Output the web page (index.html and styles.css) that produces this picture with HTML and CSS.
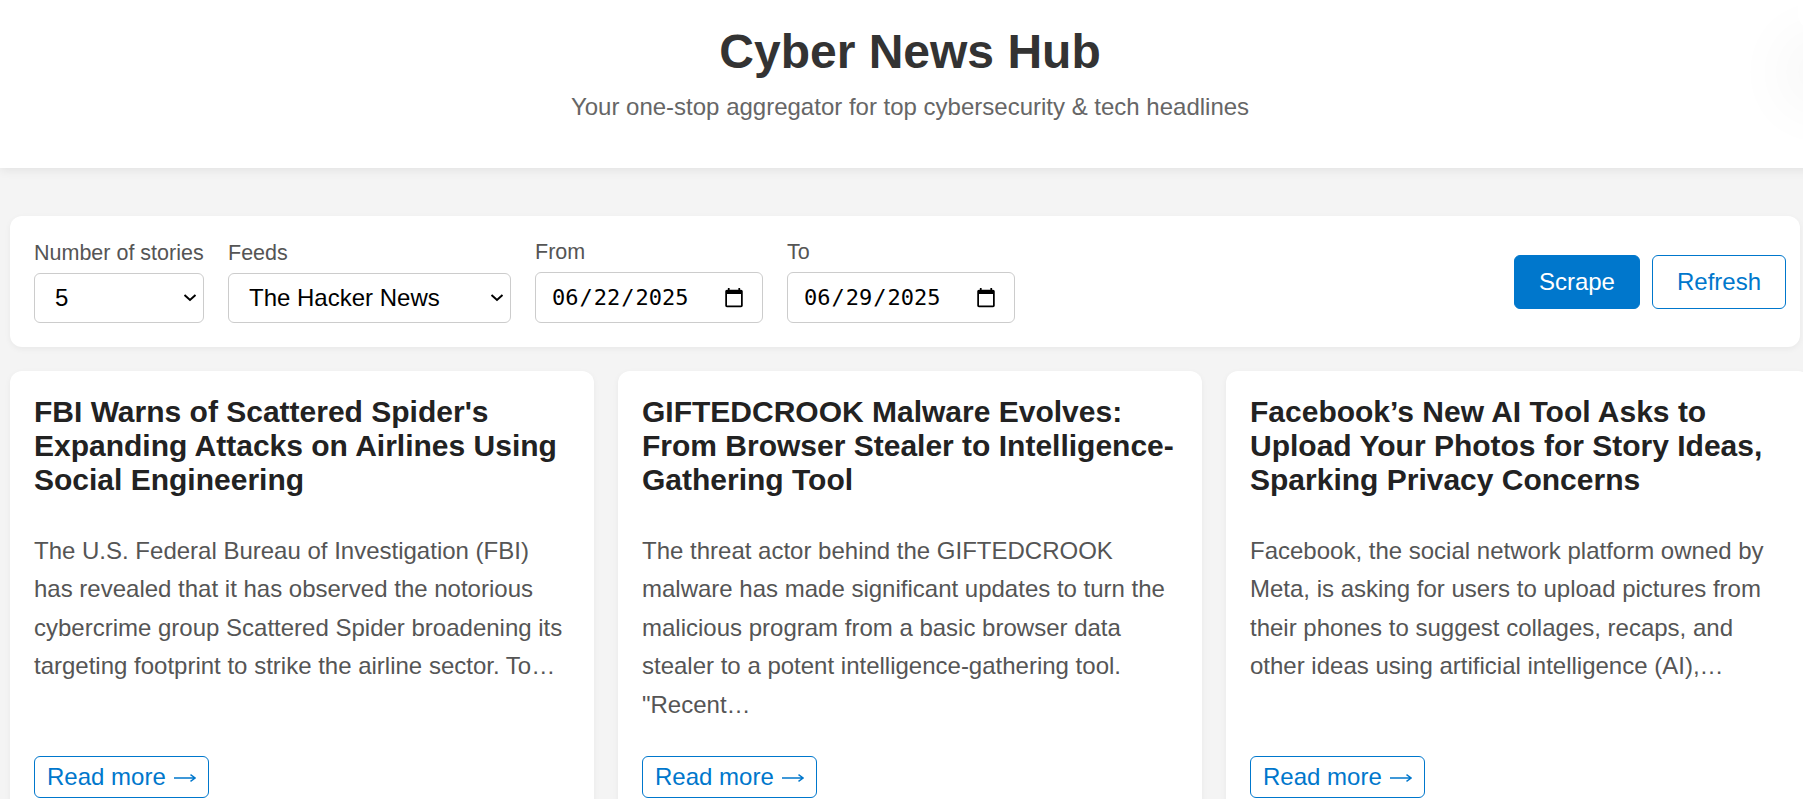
FILE: index.html
```html
<!DOCTYPE html>
<html lang="en">
<head>
<meta charset="utf-8">
<title>Cyber News Hub</title>
<link rel="stylesheet" href="styles.css">
</head>
<body>
<header class="site-header">
  <h1 class="site-title">Cyber News Hub</h1>
  <p class="site-tagline">Your one-stop aggregator for top cybersecurity &amp; tech headlines</p>
</header>

<main class="container">
  <section class="controls">
    <div class="field">
      <label class="field-label" for="count">Number of stories</label>
      <select id="count" class="input select sel-count">
        <option>5</option>
        <option>10</option>
        <option>15</option>
        <option>20</option>
      </select>
    </div>
    <div class="field">
      <label class="field-label" for="feed">Feeds</label>
      <select id="feed" class="input select sel-feed">
        <option>The Hacker News</option>
        <option>Krebs on Security</option>
        <option>BleepingComputer</option>
      </select>
    </div>
    <div class="field">
      <label class="field-label" for="from">From</label>
      <input id="from" class="input date" type="date" value="2025-06-22">
    </div>
    <div class="field">
      <label class="field-label" for="to">To</label>
      <input id="to" class="input date" type="date" value="2025-06-29">
    </div>
    <div class="actions">
      <button class="btn btn-primary" type="button">Scrape</button>
      <button class="btn btn-outline" type="button">Refresh</button>
    </div>
  </section>

  <section class="grid">
    <article class="card">
      <h2 class="card-title">FBI Warns of Scattered Spider's Expanding Attacks on Airlines Using Social Engineering</h2>
      <p class="card-text">The U.S. Federal Bureau of Investigation (FBI) has revealed that it has observed the notorious cybercrime group Scattered Spider broadening its targeting footprint to strike the airline sector. To…</p>
      <a class="read-more" href="#">Read more <svg class="arrow" width="22" height="10" viewBox="0 0 22 10" aria-hidden="true"><path d="M0 5H21M16.5 1.6L21.2 5L16.5 8.4" fill="none" stroke="currentColor" stroke-width="1.4"/></svg></a>
    </article>
    <article class="card">
      <h2 class="card-title">GIFTEDCROOK Malware Evolves: From Browser Stealer to Intelligence-Gathering Tool</h2>
      <p class="card-text">The threat actor behind the GIFTEDCROOK malware has made significant updates to turn the malicious program from a basic browser data stealer to a potent intelligence-gathering tool. "Recent…</p>
      <a class="read-more" href="#">Read more <svg class="arrow" width="22" height="10" viewBox="0 0 22 10" aria-hidden="true"><path d="M0 5H21M16.5 1.6L21.2 5L16.5 8.4" fill="none" stroke="currentColor" stroke-width="1.4"/></svg></a>
    </article>
    <article class="card">
      <h2 class="card-title">Facebook’s New AI Tool Asks to Upload Your Photos for Story Ideas, Sparking Privacy Concerns</h2>
      <p class="card-text">Facebook, the social network platform owned by Meta, is asking for users to upload pictures from their phones to suggest collages, recaps, and other ideas using artificial intelligence (AI),…</p>
      <a class="read-more" href="#">Read more <svg class="arrow" width="22" height="10" viewBox="0 0 22 10" aria-hidden="true"><path d="M0 5H21M16.5 1.6L21.2 5L16.5 8.4" fill="none" stroke="currentColor" stroke-width="1.4"/></svg></a>
    </article>
  </section>
</main>

<button class="theme-toggle" type="button" aria-label="Toggle theme"></button>
</body>
</html>
```

FILE: styles.css
```css
html {
  scrollbar-width: none;
}
html::-webkit-scrollbar {
  display: none;
}

body {
  margin: 0;
  min-width: 1820px;
  background: #f4f4f4;
  font-family: "Liberation Sans", Arial, sans-serif;
  color: #333;
  overflow-x: hidden;
}

.site-header {
  position: relative;
  background: #fff;
  text-align: center;
  padding: 24px 0 24px;
  box-shadow: 0 2px 10px rgba(0, 0, 0, 0.08);
}

.site-title {
  margin: 0;
  font-size: 48px;
  font-weight: bold;
  color: #333;
}

.site-tagline {
  margin: 14px 0 23px;
  font-size: 24px;
  color: #666;
}

.container {
  padding: 48px 10px 0;
}

.controls {
  display: flex;
  align-items: center;
  gap: 24px;
  margin-right: 10px;
  padding: 24px 14px 24px 24px;
  background: #fff;
  border-radius: 12px;
  box-shadow: 0 2px 6px rgba(0, 0, 0, 0.05);
}

.field {
  display: flex;
  flex-direction: column;
  gap: 7px;
}

.field-label {
  font-size: 21.5px;
  color: #555;
}

.input {
  box-sizing: border-box;
  height: 50px;
  padding: 0 16px;
  border: 1px solid #ccc;
  border-radius: 6px;
  background-color: #fff;
  color: #000;
  font-family: "Liberation Sans", Arial, sans-serif;
  font-size: 24px;
}

.select {
  appearance: none;
  -webkit-appearance: none;
  padding: 0 30px 0 20px;
  background-image: url("data:image/svg+xml,%3Csvg xmlns='http://www.w3.org/2000/svg' width='14' height='9' viewBox='0 0 14 9'%3E%3Cpath d='M1.5 2L7 7L12.5 2' fill='none' stroke='%23000' stroke-width='2'/%3E%3C/svg%3E");
  background-repeat: no-repeat;
  background-position: right 6px center;
  background-size: 14px 9px;
}

.sel-count {
  width: 170px;
}

.sel-feed {
  width: 283px;
}

.date {
  width: 228px;
  height: 51px;
  padding: 0 15px;
  font-family: "DejaVu Sans Mono", "Liberation Mono", monospace;
  font-size: 22px;
}

.actions {
  display: flex;
  gap: 12px;
  margin-left: auto;
}

.btn {
  padding: 12px 24px;
  border: 1px solid #0077cc;
  border-radius: 6px;
  font-family: "Liberation Sans", Arial, sans-serif;
  font-size: 24px;
  line-height: normal;
  cursor: pointer;
}

.btn-primary {
  background: #0077cc;
  color: #fff;
}

.btn-outline {
  background: #fff;
  color: #0077cc;
}

.grid {
  display: grid;
  grid-template-columns: repeat(3, 1fr);
  gap: 24px;
  margin-top: 24px;
}

.card {
  display: flex;
  flex-direction: column;
  align-items: flex-start;
  padding: 24px;
  background: #fff;
  border-radius: 12px;
  box-shadow: 0 2px 6px rgba(0, 0, 0, 0.05);
}

.card-title {
  margin: 0 0 35px;
  font-size: 30px;
  font-weight: bold;
  color: #222;
}

.card-text {
  margin: 0 0 32px;
  font-size: 24px;
  line-height: 1.6;
  color: #555;
}

.read-more {
  margin-top: auto;
  padding: 6px 12px;
  border: 1px solid #0077cc;
  border-radius: 6px;
  font-size: 24px;
  color: #0077cc;
  text-decoration: none;
}

.arrow {
  margin-left: 2px;
  vertical-align: 2px;
}

.theme-toggle {
  position: fixed;
  top: -10px;
  right: -39px;
  width: 44px;
  height: 44px;
  padding: 0;
  border: none;
  border-radius: 50%;
  background: #fff;
  box-shadow: 0 60px 60px 20px rgba(0, 0, 0, 0.035);
}
```
